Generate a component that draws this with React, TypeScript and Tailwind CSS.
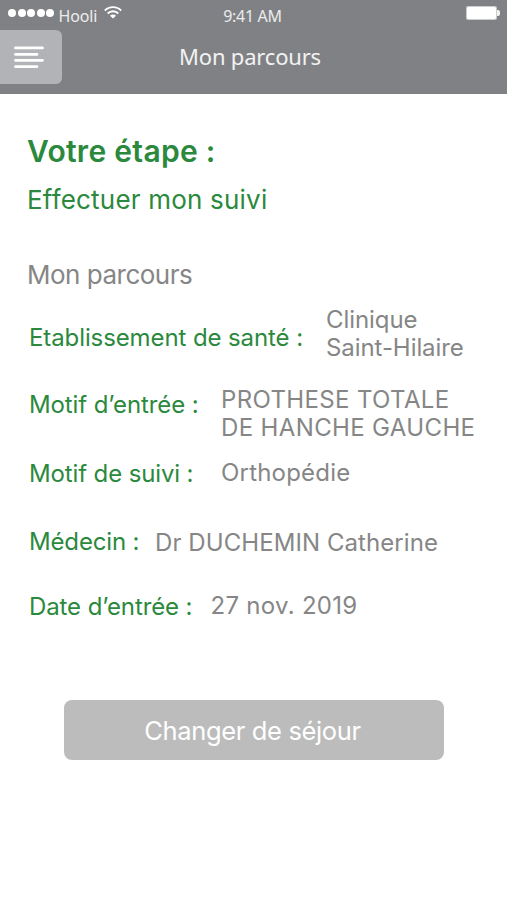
import { clsx } from "clsx";

type Field = {
  label: string;
  lines: string[];
  rowClass: string;
  labelClass: string;
  valueClass: string;
};

const fields: Field[] = [
  {
    label: "Etablissement de santé :",
    lines: ["Clinique", "Saint-Hilaire"],
    rowClass: "mt-[15px]",
    labelClass: "mt-[18px] w-[297px] tracking-[-0.1px]",
    valueClass: "tracking-[-0.07px]",
  },
  {
    label: "Motif d’entrée :",
    lines: ["PROTHESE TOTALE", "DE HANCHE GAUCHE"],
    rowClass: "mt-6",
    labelClass: "mt-[5px] w-[192px] tracking-[-0.1px]",
    valueClass: "tracking-[0.36px]",
  },
  {
    label: "Motif de suivi :",
    lines: ["Orthopédie"],
    rowClass: "mt-[17px]",
    labelClass: "mt-px w-[192px] tracking-[-0.13px]",
    valueClass: "tracking-[0.2px]",
  },
  {
    label: "Médecin :",
    lines: ["Dr DUCHEMIN Catherine"],
    rowClass: "mt-10",
    labelClass: "w-[126px] tracking-[-0.15px]",
    valueClass: "mt-px tracking-[0.07px]",
  },
  {
    label: "Date d’entrée :",
    lines: ["27 nov. 2019"],
    rowClass: "mt-[34px]",
    labelClass: "mt-[2px] w-[181.5px] tracking-[-0.1px]",
    valueClass: "mt-px tracking-[0.28px]",
  },
];

function WifiIcon() {
  return (
    <svg width="18" height="13" viewBox="0 0 18 13" fill="none" stroke="white" strokeWidth="1.9">
      <path d="M0.8 4.6C5.3 0 12.7 0 17.2 4.6" />
      <path d="M3.7 7.5C6.6 4.4 11.4 4.4 14.3 7.5" />
      <path d="M9 12.4L6 9.8C7.6 8.2 10.4 8.2 12 9.8Z" fill="white" stroke="none" />
    </svg>
  );
}

function StatusBar() {
  return (
    <div className="grid h-[30px] grid-cols-3 leading-[32px] text-white/85">
      <div className="flex items-start pl-2">
        <div className="mt-[9px] flex gap-[1.6px]">
          {[0, 1, 2, 3, 4].map((i) => (
            <span key={i} className="size-[8px] rounded-full bg-white" />
          ))}
        </div>
        <span className="ml-[4px] text-[16px] tracking-[-0.1px]">Hooli</span>
        <span className="mt-[6px] ml-[7px]">
          <WifiIcon />
        </span>
      </div>
      <span className="pr-[2px] text-center text-[16px] tracking-[-0.3px]">9:41 AM</span>
      <div className="flex items-start justify-end pt-[6px] pr-[7px]">
        <span className="h-[14px] w-[31px] rounded-[2px] border border-white/60 bg-white bg-clip-padding" />
        <span className="mt-[4px] h-[6px] w-[3px] rounded-r-[2px] bg-white/90" />
      </div>
    </div>
  );
}

function Header() {
  return (
    <header className="h-[94px] bg-[#808184] font-['Noto_Sans',sans-serif]">
      <StatusBar />
      <div className="grid grid-cols-[62px_1fr_69px]">
        <button aria-label="Menu" className="h-[54px] rounded-r-[6px] bg-[#b2b3b6] pl-[14px]">
          <svg width="30" height="24" viewBox="0 0 30 24" stroke="white" strokeWidth="2.8" strokeLinecap="round">
            <path d="M1.5 2.9H28.5M1.5 9.4H23M1.5 15.3H28.5M1.5 21.7H23" />
          </svg>
        </button>
        <h1 className="text-center text-[22px] leading-[52px] tracking-[-0.2px] text-white/90">Mon parcours</h1>
      </div>
    </header>
  );
}

export default function App() {
  return (
    <div className="flex h-[900px] w-[507px] flex-col overflow-hidden bg-white">
      <Header />
      <main className="flex flex-col pt-[37px] font-['Inter',sans-serif] whitespace-nowrap text-[#868686]">
        <h2 className="pl-[27px] text-[30px] leading-[40px] font-semibold tracking-[0.3px] text-[#2b893d]">
          Votre étape :
        </h2>
        <p className="mt-[13px] pl-[27px] text-[26px] leading-[32px] tracking-[0.2px] text-[#2b893d]">
          Effectuer mon suivi
        </p>
        <p className="mt-[43px] pl-[27px] text-[26px] leading-[32px] tracking-[-0.5px]">Mon parcours</p>

        <dl className="pl-[29px] text-[24px] leading-7">
          {fields.map((field) => (
            <div key={field.label} className={clsx("flex items-start", field.rowClass)}>
              <dt className={clsx("shrink-0 text-[#2b893d]", field.labelClass)}>{field.label}</dt>
              <dd className={field.valueClass}>
                {field.lines.map((line) => (
                  <div key={line}>{line}</div>
                ))}
              </dd>
            </div>
          ))}
        </dl>

        <button className="mx-auto mt-[79px] h-[60px] w-[380px] rounded-[8px] bg-[#bcbcbc] pt-[3px] pr-[2px] text-[25.5px] tracking-[-0.35px] text-white">
          Changer de séjour
        </button>
      </main>
    </div>
  );
}
